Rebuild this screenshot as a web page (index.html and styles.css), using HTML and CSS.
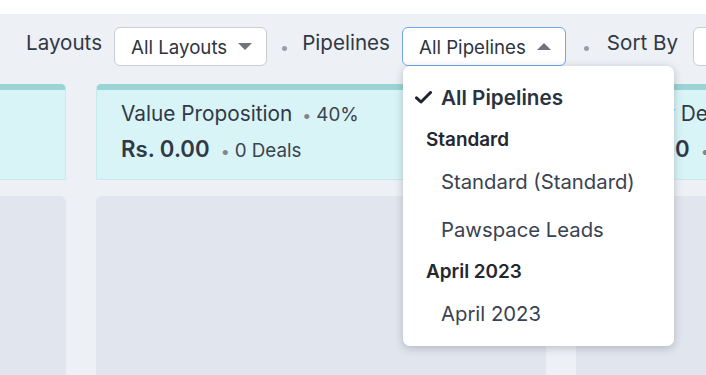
FILE: index.html
```html
<!DOCTYPE html>
<html lang="en">
<head>
    <meta charset="UTF-8">
    <meta name="viewport" content="width=device-width, initial-scale=1.0">
    <title>Deals Kanban</title>
    <link rel="stylesheet" href="styles.css">
</head>
<body>

    <div class="topstrip"></div>

    <div class="toolbar">
        <span class="label">Layouts</span>
        <div class="select">
            <span>All Layouts</span>
            <span class="caret down"></span>
        </div>
        <span class="sep"></span>
        <span class="label">Pipelines</span>
        <div class="select open">
            <span>All Pipelines</span>
            <span class="caret up"></span>

            <div class="menu">
                <div class="item selected">
                    <svg class="tick" width="17" height="13" viewBox="0 0 17 13">
                        <path d="M1.5 6.8 L6 11 L15.5 1.5" fill="none" stroke="#1f232b" stroke-width="3" stroke-linecap="round" stroke-linejoin="round"/>
                    </svg>
                    All Pipelines
                </div>
                <div class="group">Standard</div>
                <div class="item">Standard (Standard)</div>
                <div class="item">Pawspace Leads</div>
                <div class="group">April 2023</div>
                <div class="item">April 2023</div>
            </div>
        </div>
        <span class="sep wide"></span>
        <span class="label">Sort By</span>
        <div class="select short"></div>
    </div>

    <div class="board">
        <div class="column">
            <div class="stage"></div>
            <div class="lane"></div>
        </div>
        <div class="column">
            <div class="stage">
                <div class="stage-title">Value Proposition<span class="dot">&bull;</span><span class="meta">40%</span></div>
                <div class="stage-sum">Rs. 0.00<span class="dot">&bull;</span><span class="meta">0 Deals</span></div>
            </div>
            <div class="lane"></div>
        </div>
        <div class="column">
            <div class="stage">
                <div class="stage-title">Identify Decision Makers<span class="dot">&bull;</span><span class="meta">60%</span></div>
                <div class="stage-sum">Rs. 0.00<span class="dot">&bull;</span><span class="meta">0 Deals</span></div>
            </div>
            <div class="lane"></div>
        </div>
    </div>

</body>
</html>
```

FILE: styles.css
```css
html, body {
    margin: 0;
    padding: 0;
    font-family: "Inter", "Liberation Sans", sans-serif;
    color: #313846;
    background-color: #edf0f5;
    height: 100%;
    overflow: hidden;
}
.topstrip {
    height: 14px;
    background-color: white;
}
.toolbar {
    height: 70px;
    box-sizing: border-box;
    display: flex;
    align-items: flex-start;
    padding-top: 13px;
    padding-left: 26px;
    white-space: nowrap;
}
.toolbar > * {
    flex: none;
}
.label {
    font-size: 20.6px;
    line-height: 24px;
    margin-top: 4px;
}
.select {
    position: relative;
    display: flex;
    align-items: center;
    height: 39px;
    box-sizing: border-box;
    margin-left: 12px;
    padding: 2px 14px 0 16px;
    background-color: white;
    border: 1px solid #c9cdd4;
    border-radius: 6px;
    font-size: 18.7px;
    color: #2d3340;
}
.select.open {
    border-color: #6ea6ef;
}
.select.short {
    width: 60px;
    margin-left: 15px;
    padding: 0;
}
.caret {
    margin-left: 11px;
    margin-top: -2px;
    width: 0;
    height: 0;
    border-left: 7px solid transparent;
    border-right: 7px solid transparent;
}
.caret.down {
    border-top: 7px solid #6f747c;
}
.caret.up {
    border-bottom: 7px solid #6f747c;
}
.sep {
    width: 5px;
    height: 5px;
    border-radius: 50%;
    background-color: #9a9fa7;
    margin: 19px 15px 0 15px;
}
.sep.wide {
    margin-left: 18px;
    margin-right: 18px;
}
.menu {
    position: absolute;
    z-index: 10;
    top: 38px;
    left: 0;
    width: 271px;
    padding: 7px 0 9px;
    background-color: white;
    border-radius: 7px;
    box-shadow: 0 2px 9px rgba(30, 40, 60, 0.25);
    color: #3a4252;
}
.item {
    height: 48px;
    display: flex;
    align-items: center;
    padding-left: 38px;
    font-size: 20.3px;
}
.item.selected {
    padding-left: 12px;
    font-weight: 600;
    font-size: 20.7px;
    color: #2b3240;
}
.tick {
    margin-right: 9px;
}
.group {
    height: 36px;
    display: flex;
    align-items: center;
    padding-left: 23px;
    font-size: 18.9px;
    font-weight: 600;
    color: #23272f;
}
.board {
    display: flex;
    gap: 30px;
    margin-left: -384px;
}
.column {
    flex: none;
    width: 450px;
    display: flex;
    flex-direction: column;
    gap: 16px;
}
.stage {
    height: 96px;
    box-sizing: border-box;
    padding: 0 24px;
    background-color: #d9f4f7;
    border: 1px solid #c8e9ee;
    border-top: 6px solid #9ad4d4;
    border-radius: 5px 5px 0 0;
    white-space: nowrap;
    overflow: hidden;
}
.stage-title {
    margin-top: 12px;
    font-size: 20.8px;
    line-height: 24px;
}
.stage-sum {
    margin-top: 8px;
    font-size: 22.2px;
    line-height: 28px;
    font-weight: 600;
}
.dot {
    font-size: 16px;
    font-weight: normal;
    color: #80868f;
    margin: 0 5px 0 10px;
}
.stage-sum .dot {
    margin-left: 11px;
}
.meta {
    font-size: 18.8px;
    font-weight: normal;
    color: #3c4350;
}
.lane {
    height: 179px;
    background-color: #e1e5ed;
    border-radius: 6px 6px 0 0;
}
```
